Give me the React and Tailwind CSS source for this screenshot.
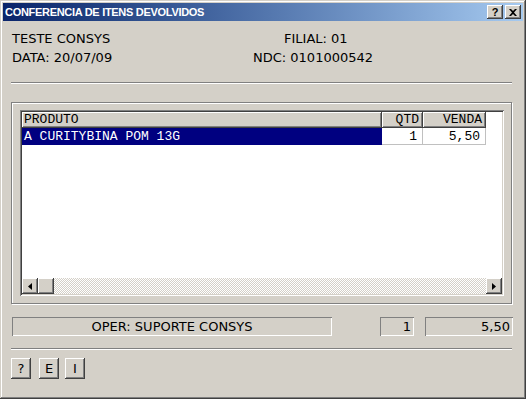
import React from 'react'

const raised =
  'bg-[#d4d0c8] shadow-[inset_-1px_-1px_0_#404040,inset_1px_1px_0_#ffffff,inset_-2px_-2px_0_#808080,inset_2px_2px_0_#d4d0c8]'
const sunkenThin =
  'shadow-[inset_1px_1px_0_#808080,inset_-1px_-1px_0_#ffffff]'
const etched =
  'border border-[#808080] shadow-[inset_1px_1px_0_#ffffff,1px_1px_0_#ffffff]'

const sans = { fontFamily: '"DejaVu Sans", Verdana, sans-serif' }
const title = { fontFamily: '"Liberation Sans", Arial, sans-serif' }
const mono = { fontFamily: '"Liberation Mono", "Courier New", monospace' }

const Separator = () => (
  <div className="w-[501px] h-[2px] border-t border-[#808080] border-b border-b-white" />
)

const Arrow = ({ dir }) => (
  <svg width="4" height="7" viewBox="0 0 4 7">
    {dir === 'left' ? (
      <path d="M4 0 L0 3.5 L4 7 Z" fill="#000" />
    ) : (
      <path d="M0 0 L4 3.5 L0 7 Z" fill="#000" />
    )}
  </svg>
)

const CaptionButton = ({ children }) => (
  <div className={`${raised} w-[16px] h-[14px] flex items-center justify-center`}>
    {children}
  </div>
)

const Grid = () => (
  <div className="w-[484px] h-[186px] bg-white p-[2px] flex flex-col shadow-[inset_1px_1px_0_#808080,inset_-1px_-1px_0_#ffffff,inset_2px_2px_0_#404040,inset_-2px_-2px_0_#d4d0c8]">
    <div className="flex h-[16px] text-[13px] leading-[16px] text-black" style={mono}>
      <div className={`${raised} w-[360px] pl-[2px]`}>PRODUTO</div>
      <div className={`${raised} w-[41px] pr-[4px] text-right`}>QTD</div>
      <div className={`${raised} w-[63px] pr-[4px] text-right`}>VENDA</div>
    </div>
    <div className="flex h-[17px] text-[13px] leading-[17px]" style={mono}>
      <div className="w-[360px] bg-[#000080] text-white pl-[2px]">A CURITYBINA POM 13G</div>
      <div className="w-[41px] text-right pr-[5px] border-r border-b border-[#c0c0c0]">1</div>
      <div className="w-[63px] text-right pr-[5px] border-r border-b border-[#c0c0c0]">5,50</div>
    </div>
    <div className="flex-1" />
    <div className="flex h-[16px]">
      <div className={`${raised} w-[16px] h-[16px] flex items-center justify-center`}>
        <Arrow dir="left" />
      </div>
      <div className={`${raised} w-[16px] h-[16px]`} />
      <div className="flex-1 bg-[repeating-conic-gradient(#d4d0c8_0%_25%,#ffffff_0%_50%)] [background-size:2px_2px]" />
      <div className={`${raised} w-[16px] h-[16px] flex items-center justify-center`}>
        <Arrow dir="right" />
      </div>
    </div>
  </div>
)

export default function App() {
  return (
    <div
      className="w-[526px] h-[399px] bg-[#d4d0c8] p-[3px] overflow-hidden shadow-[inset_-1px_-1px_0_#404040,inset_1px_1px_0_#d4d0c8,inset_-2px_-2px_0_#808080,inset_2px_2px_0_#ffffff]"
      style={sans}
    >
      <div className="h-[18px] bg-linear-to-r from-[#0a246a] to-[#a6caf0] flex items-center pl-[2px] pr-[2px]" style={title}>
        <span className="flex-1 text-white font-bold text-[11px] tracking-[-0.3px] leading-[18px]">
          CONFERENCIA DE ITENS DEVOLVIDOS
        </span>
        <div className="flex gap-[2px]">
          <CaptionButton>
            <span className="text-[11px] font-bold leading-none text-black">?</span>
          </CaptionButton>
          <CaptionButton>
            <svg width="8" height="7" viewBox="0 0 8 7">
              <path d="M0 0 H2 L4 2 L6 0 H8 L5 3.5 L8 7 H6 L4 5 L2 7 H0 L3 3.5 Z" fill="#000" />
            </svg>
          </CaptionButton>
        </div>
      </div>

      <div className="pl-[8px] text-[13px] text-black">
        <div className="mt-[10px] flex h-[16px] leading-[16px]">
          <span className="w-[273px] pl-[1px]">TESTE CONSYS</span>
          <span>FILIAL: 01</span>
        </div>
        <div className="mt-[3px] flex h-[16px] leading-[16px]">
          <span className="w-[242px] pl-[1px]">DATA: 20/07/09</span>
          <span>NDC: 0101000542</span>
        </div>

        <div className="mt-[16px]">
          <Separator />
        </div>

        <div className={`mt-[18px] w-[501px] h-[202px] ${etched} pt-[7px] pl-[8px]`}>
          <Grid />
        </div>

        <div className="mt-[13px] flex h-[19px] leading-[19px]">
          <div className={`${sunkenThin} ml-[1px] w-[320px] text-center`}>OPER: SUPORTE CONSYS</div>
          <div className={`${sunkenThin} ml-[48px] w-[34px] text-right pr-[3px]`}>1</div>
          <div className={`${sunkenThin} ml-[11px] w-[88px] text-right pr-[3px]`}>5,50</div>
        </div>

        <div className="mt-[12px]">
          <Separator />
        </div>

        <div className="mt-[8px] flex h-[21px]">
          <div className={`${raised} w-[20px] h-[21px] flex items-center justify-center`}>?</div>
          <div className={`${raised} ml-[8px] w-[20px] h-[21px] flex items-center justify-center`}>E</div>
          <div className={`${raised} ml-[6px] w-[20px] h-[21px] flex items-center justify-center`}>I</div>
        </div>
      </div>
    </div>
  )
}
